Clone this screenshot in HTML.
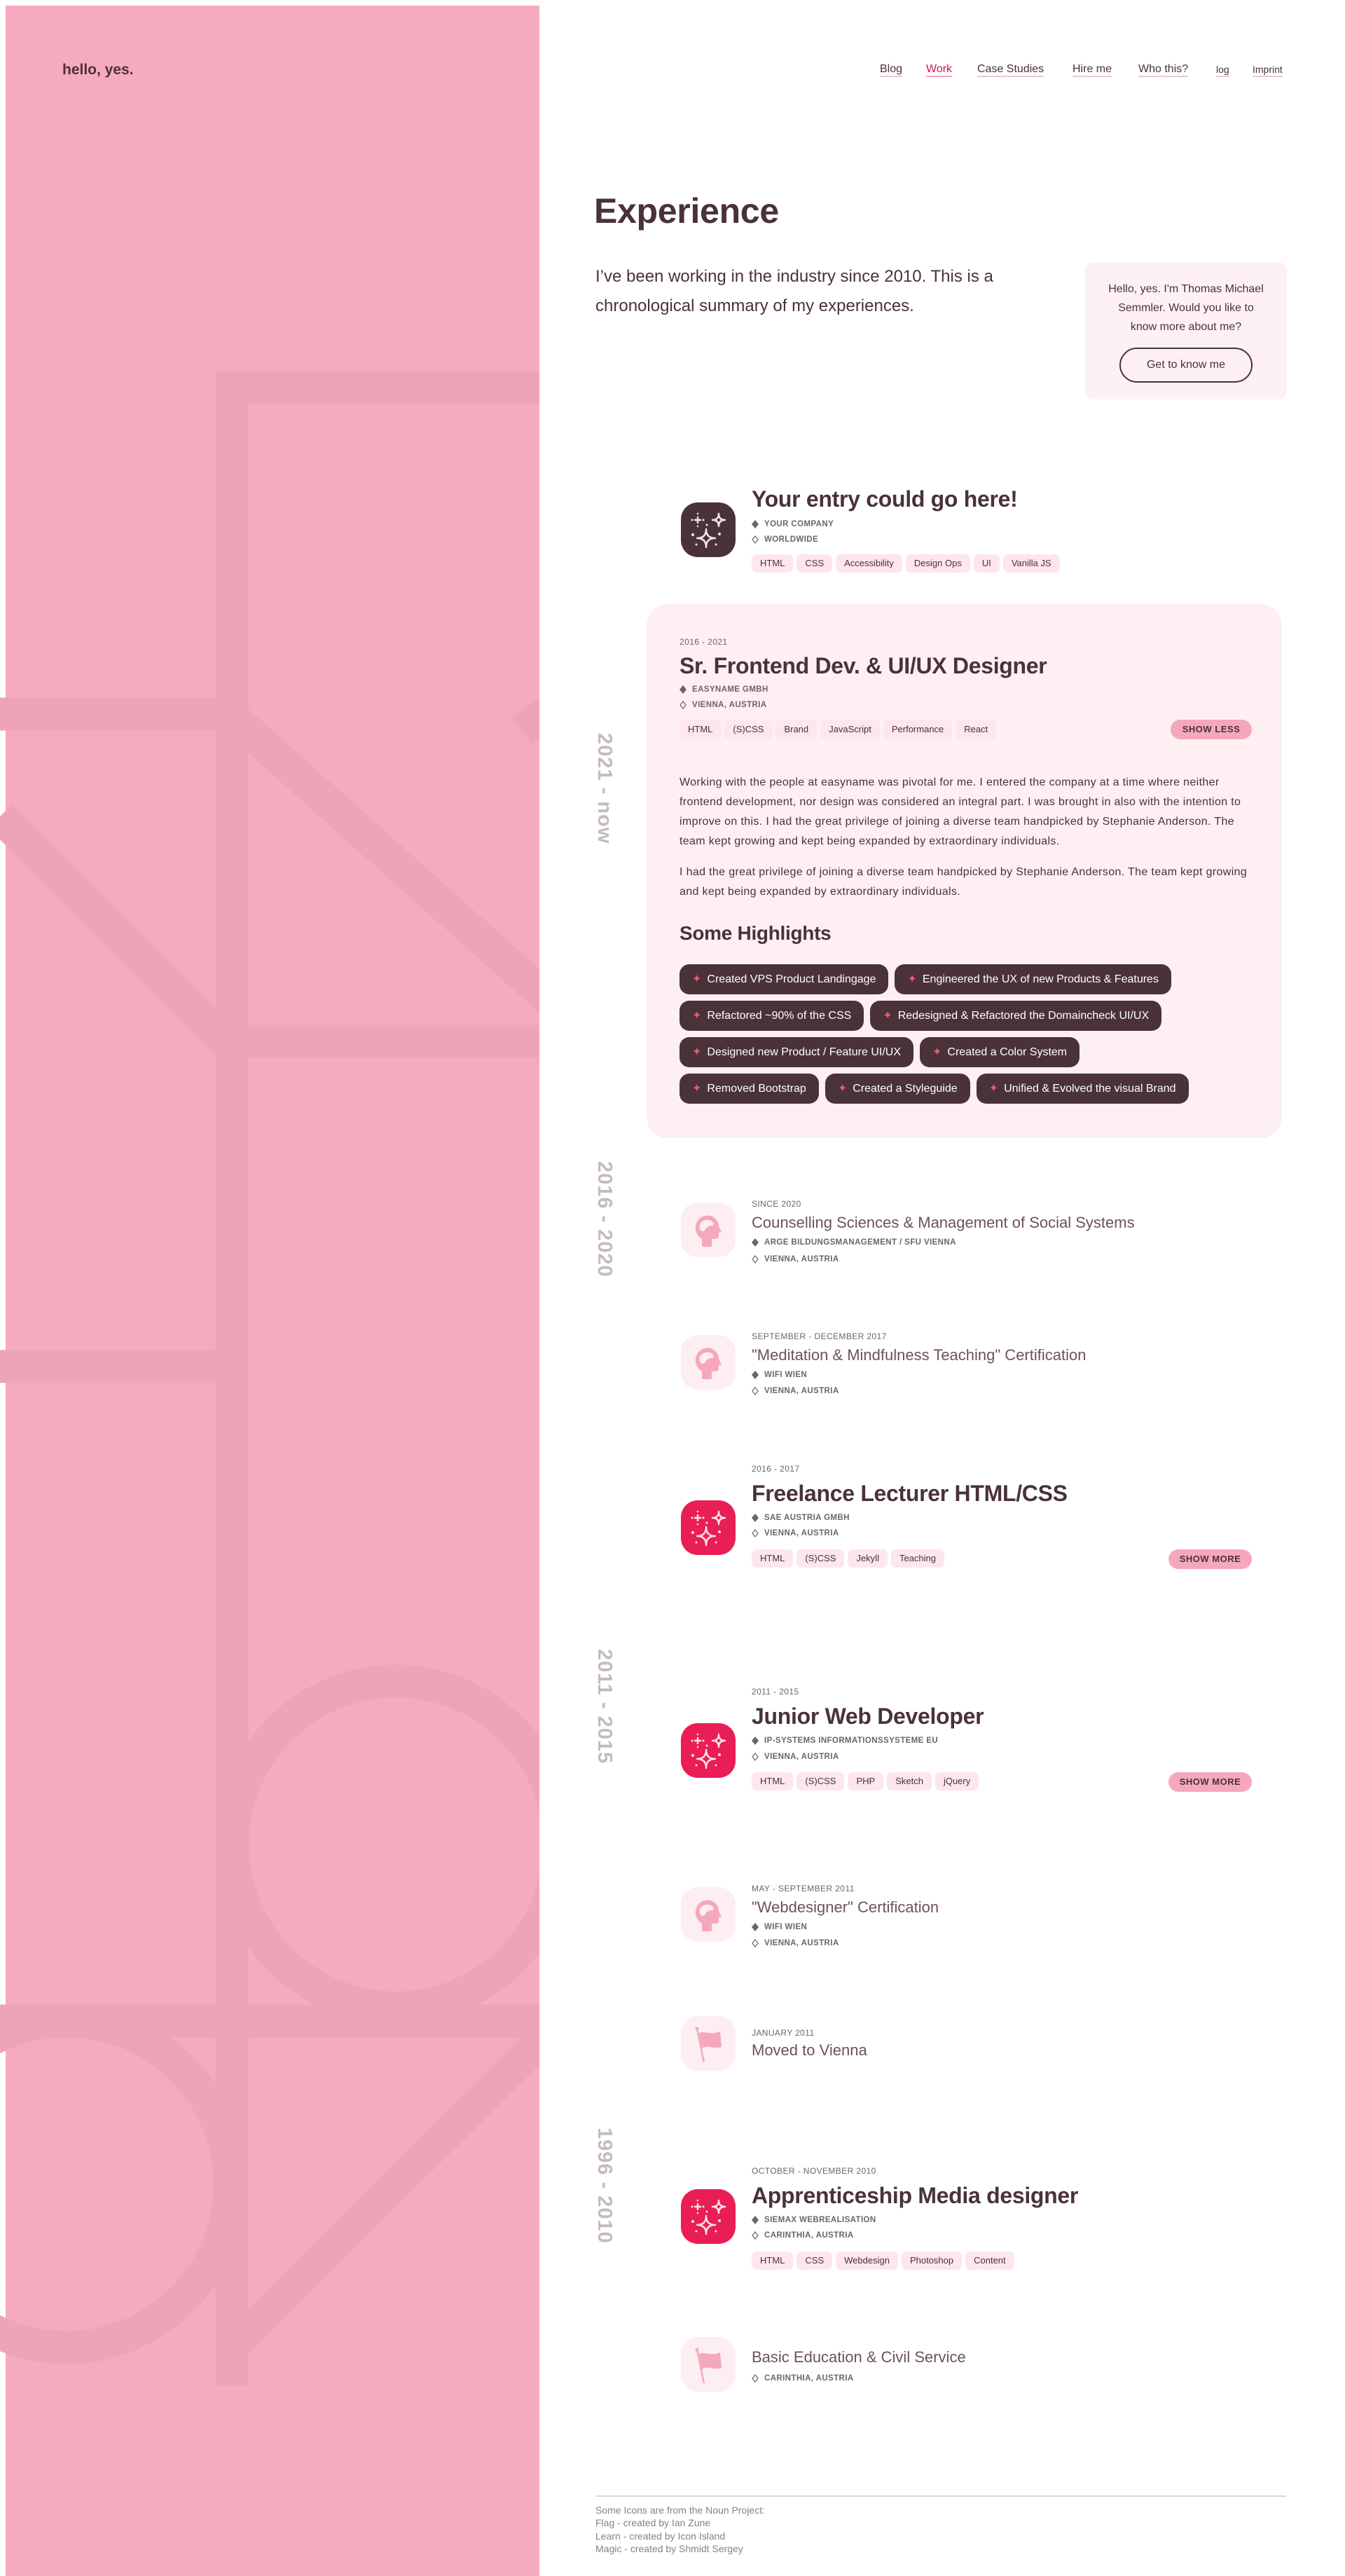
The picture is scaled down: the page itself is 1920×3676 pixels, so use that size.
<!DOCTYPE html>
<html><head><meta charset="utf-8">
<style>
*{margin:0;padding:0;box-sizing:border-box}
html,body{width:1920px;height:3676px;background:#fff;overflow:hidden}
body{position:relative;font-family:"Liberation Sans",sans-serif;color:#4a3239}
.abs{position:absolute}
.nav a{position:absolute;top:90px;font-size:16px;color:#4a3239;text-decoration:none;border-bottom:2px solid #e8c9d1;line-height:18px}
.year{position:absolute;left:850px;width:26px;writing-mode:vertical-rl;font-size:29px;font-weight:bold;color:#c5bbbe;letter-spacing:1px;white-space:nowrap;line-height:26px}
.icon{position:absolute;left:972px;width:78px;height:78px;border-radius:24px}
.dark{background:#4a3239}.red{background:#e91e54}.soft{background:#fdeef2}
.date{position:absolute;left:1073px;font-size:12px;color:#6e6366;letter-spacing:.4px;line-height:14px;white-space:nowrap}
.t1{position:absolute;left:1073px;font-size:32px;font-weight:bold;color:#4a3239;line-height:36px;white-space:nowrap;letter-spacing:-.3px}
.t2{position:absolute;left:1073px;font-size:22px;color:#6b5359;line-height:26px;white-space:nowrap}
.meta{position:absolute;left:1073px;font-size:11.5px;font-weight:bold;color:#6e6366;letter-spacing:.4px;line-height:14px;white-space:nowrap;display:flex;align-items:center;gap:8px}
.tags{position:absolute;left:1073px;display:flex;gap:5px}
.tag{background:#fde6ec;border-radius:7px;font-size:13px;color:#4a3239;padding:0 12px;height:26px;line-height:26px}
.btn{position:absolute;left:1668px;width:119px;height:28px;border-radius:14px;background:#f5a8bc;font-size:13px;font-weight:bold;letter-spacing:.5px;color:#4a3239;text-align:center;line-height:28px}
.pills{position:absolute;left:970px;top:1376px;width:820px}
.row{display:flex;gap:9px;margin-bottom:9px}
.pill{background:#4a3239;color:#fff;border-radius:14px;height:43px;line-height:43px;padding:0 18px;font-size:16px;white-space:nowrap}
.pill b{color:#f0567a;font-weight:normal;margin-right:8px}
.para{font-size:16px;line-height:28px;color:#4a3239;letter-spacing:.35px}
</style></head><body>

<svg class="abs" style="left:0;top:0" width="774" height="3676" viewBox="0 0 774 3676">
<defs><clipPath id="c"><rect x="0" y="8" width="770" height="3668"/></clipPath></defs>
<rect x="8" y="8" width="762" height="3668" fill="#f6aabe"/>
<g clip-path="url(#c)" fill="none" stroke="#eea4b7" stroke-width="47">
<line x1="331" y1="530" x2="331" y2="3404"/>
<line x1="308" y1="553" x2="780" y2="553"/>
<line x1="0" y1="1019" x2="331" y2="1019"/>
<line x1="331" y1="1022" x2="790" y2="1432"/>
<line x1="0" y1="1165" x2="331" y2="1495"/>
<line x1="745" y1="1043" x2="790" y2="1010"/>
<line x1="331" y1="1486" x2="780" y2="1486"/>
<line x1="0" y1="1950" x2="331" y2="1950"/>
<circle cx="565" cy="2632" r="233"/>
<line x1="0" y1="2884" x2="780" y2="2884"/>
<circle cx="95" cy="3117" r="233"/>
</g>
<g clip-path="url(#c)"><polygon points="355,3295 745,2907 774,2907 774,2943 308,3404 308,3330" fill="#eea4b7"/></g>
</svg>

<div class="abs" style="left:89px;top:88px;font-size:21px;font-weight:bold;color:#4a3239">hello, yes.</div>

<div class="nav">
<a style="left:1256px">Blog</a>
<a style="left:1322px;color:#d1164a;border-color:#f5a8bc">Work</a>
<a style="left:1395px">Case Studies</a>
<a style="left:1531px">Hire me</a>
<a style="left:1625px">Who this?</a>
<a style="left:1736px;font-size:14px">log</a>
<a style="left:1788px;font-size:14px">Imprint</a>
</div>

<div class="abs" style="left:848px;top:272px;font-size:50px;font-weight:bold;color:#4a3239;letter-spacing:-.3px">Experience</div>
<div class="abs" style="left:850px;top:374px;width:640px;font-size:24px;line-height:42px;color:#4a3239">I’ve been working in the industry since 2010. This is a chronological summary of my experiences.</div>

<div class="abs" style="left:1549px;top:374px;width:288px;height:196px;background:#fdf1f4;border-radius:12px">
<div style="position:absolute;left:0;top:25px;width:288px;text-align:center;font-size:16px;line-height:27px;color:#4a3239">Hello, yes. I'm Thomas Michael<br>Semmler. Would you like to<br>know more about me?</div>
<div style="position:absolute;left:49px;top:122px;width:190px;height:50px;border:2px solid #4a3239;border-radius:25px;text-align:center;line-height:46px;font-size:16px;color:#4a3239">Get to know me</div>
</div>

<div class="year" style="top:1046px">2021 - now</div>
<div class="year" style="top:1657px">2016 - 2020</div>
<div class="year" style="top:2353px">2011 - 2015</div>
<div class="year" style="top:3036px">1996 - 2010</div>

<svg width="0" height="0" style="position:absolute">
<defs>
<g id="spark" fill="none" stroke="#fbe3ea" stroke-width="2.4" stroke-linejoin="round">
<path d="M36 38 Q36 51 49 51 Q36 51 36 64 Q36 51 23 51 Q36 51 36 38Z"/>
<path d="M54 16 Q54 25 63 25 Q54 25 54 34 Q54 25 45 25 Q54 25 54 16Z"/>
<path d="M24 20v10M19 25h10" />
<g fill="#fbe3ea" stroke="none"><circle cx="16" cy="25" r="1.5"/><circle cx="32" cy="25" r="1.5"/><circle cx="24" cy="16" r="1.3"/><circle cx="24" cy="34" r="1.3"/><circle cx="37" cy="32" r="1.5"/><circle cx="17" cy="46" r="2"/><circle cx="55" cy="45" r="2"/><circle cx="22" cy="60" r="1.5"/><circle cx="50" cy="60" r="1.5"/></g>
</g>
<g id="head"><path fill="#f5a8bc" d="M30 63 L30 52 C22 47 19 38 22 30 C25 21 34 17 42 19 C50 21 54 28 54 34 L58 42 L54 43 L54 48 C54 51 51 52 48 52 L44 52 L44 63 Z"/><path fill="#fdeef2" d="M27 37 C25 29 32 24 40 25 C46 26 48 31 45 33 C40 33 36 35 34 40 C31 42 28 41 27 37 Z"/></g>
<g id="flag"><path stroke="#f5a8bc" stroke-width="2.5" d="M23 18 L33 66" fill="none"/><circle cx="23" cy="18" r="2.5" fill="#f5a8bc"/><path fill="#f5a8bc" d="M26 24 C34 20 42 28 56 22 L58 44 C46 48 38 40 30 46 Z"/></g>
</defs></svg>

<div class="icon dark" style="top:717px"><svg width="78" height="78"><use href="#spark"/></svg></div>
<div class="t1" style="top:694px">Your entry could go here!</div>
<div class="meta" style="top:741px"><svg width="10" height="12"><path d="M5 0L10 6L5 12L0 6Z" fill="#6e6366"/></svg>YOUR COMPANY</div>
<div class="meta" style="top:763px"><svg width="10" height="12"><path d="M5 1L9 6L5 11L1 6Z" fill="none" stroke="#6e6366" stroke-width="1.2"/></svg>WORLDWIDE</div>
<div class="tags" style="top:791px"><span class="tag">HTML</span><span class="tag">CSS</span><span class="tag">Accessibility</span><span class="tag">Design Ops</span><span class="tag">UI</span><span class="tag">Vanilla JS</span></div>

<div class="abs" style="left:923px;top:862px;width:907px;height:762px;background:#fdeff2;border-radius:30px"></div>
<div class="date" style="left:970px;top:909px">2016 - 2021</div>
<div class="t1" style="left:970px;top:932px">Sr. Frontend Dev. &amp; UI/UX Designer</div>
<div class="meta" style="left:970px;top:977px"><svg width="10" height="12"><path d="M5 0L10 6L5 12L0 6Z" fill="#6e6366"/></svg>EASYNAME GMBH</div>
<div class="meta" style="left:970px;top:999px"><svg width="10" height="12"><path d="M5 1L9 6L5 11L1 6Z" fill="none" stroke="#6e6366" stroke-width="1.2"/></svg>VIENNA, AUSTRIA</div>
<div class="tags" style="left:970px;top:1027px"><span class="tag" style="height:28px;line-height:28px">HTML</span><span class="tag" style="height:28px;line-height:28px">(S)CSS</span><span class="tag" style="height:28px;line-height:28px">Brand</span><span class="tag" style="height:28px;line-height:28px">JavaScript</span><span class="tag" style="height:28px;line-height:28px">Performance</span><span class="tag" style="height:28px;line-height:28px">React</span></div>
<div class="btn" style="left:1671px;top:1027px;width:116px">SHOW LESS</div>
<div class="abs para" style="left:970px;top:1103px;width:820px">Working with the people at easyname was pivotal for me. I entered the company at a time where neither frontend development, nor design was considered an integral part. I was brought in also with the intention to improve on this. I had the great privilege of joining a diverse team handpicked by Stephanie Anderson. The team kept growing and kept being expanded by extraordinary individuals.</div>
<div class="abs para" style="left:970px;top:1231px;width:820px">I had the great privilege of joining a diverse team handpicked by Stephanie Anderson. The team kept growing and kept being expanded by extraordinary individuals.</div>
<div class="abs" style="left:970px;top:1316px;font-size:28px;font-weight:bold;color:#4a3239;letter-spacing:-.3px">Some Highlights</div>
<div class="pills">
<div class="row"><span class="pill"><b>✦</b>Created VPS Product Landingage</span><span class="pill"><b>✦</b>Engineered the UX of new Products &amp; Features</span></div>
<div class="row"><span class="pill"><b>✦</b>Refactored ~90% of the CSS</span><span class="pill"><b>✦</b>Redesigned &amp; Refactored the Domaincheck UI/UX</span></div>
<div class="row"><span class="pill"><b>✦</b>Designed new Product / Feature UI/UX</span><span class="pill"><b>✦</b>Created a Color System</span></div>
<div class="row"><span class="pill"><b>✦</b>Removed Bootstrap</span><span class="pill"><b>✦</b>Created a Styleguide</span><span class="pill"><b>✦</b>Unified &amp; Evolved the visual Brand</span></div>
</div>

<div class="icon soft" style="top:1716px"><svg width="78" height="78"><use href="#head"/></svg></div>
<div class="date" style="top:1711px">SINCE 2020</div>
<div class="t2" style="top:1732px">Counselling Sciences &amp; Management of Social Systems</div>
<div class="meta" style="top:1766px"><svg width="10" height="12"><path d="M5 0L10 6L5 12L0 6Z" fill="#6e6366"/></svg>ARGE BILDUNGSMANAGEMENT / SFU VIENNA</div>
<div class="meta" style="top:1790px"><svg width="10" height="12"><path d="M5 1L9 6L5 11L1 6Z" fill="none" stroke="#6e6366" stroke-width="1.2"/></svg>VIENNA, AUSTRIA</div>

<div class="icon soft" style="top:1905px"><svg width="78" height="78"><use href="#head"/></svg></div>
<div class="date" style="top:1900px">SEPTEMBER - DECEMBER 2017</div>
<div class="t2" style="top:1921px">"Meditation &amp; Mindfulness Teaching" Certification</div>
<div class="meta" style="top:1955px"><svg width="10" height="12"><path d="M5 0L10 6L5 12L0 6Z" fill="#6e6366"/></svg>WIFI WIEN</div>
<div class="meta" style="top:1978px"><svg width="10" height="12"><path d="M5 1L9 6L5 11L1 6Z" fill="none" stroke="#6e6366" stroke-width="1.2"/></svg>VIENNA, AUSTRIA</div>

<div class="icon red" style="top:2141px"><svg width="78" height="78"><use href="#spark"/></svg></div>
<div class="date" style="top:2089px">2016 - 2017</div>
<div class="t1" style="top:2113px">Freelance Lecturer HTML/CSS</div>
<div class="meta" style="top:2159px"><svg width="10" height="12"><path d="M5 0L10 6L5 12L0 6Z" fill="#6e6366"/></svg>SAE AUSTRIA GMBH</div>
<div class="meta" style="top:2181px"><svg width="10" height="12"><path d="M5 1L9 6L5 11L1 6Z" fill="none" stroke="#6e6366" stroke-width="1.2"/></svg>VIENNA, AUSTRIA</div>
<div class="tags" style="top:2211px"><span class="tag">HTML</span><span class="tag">(S)CSS</span><span class="tag">Jekyll</span><span class="tag">Teaching</span></div>
<div class="btn" style="top:2211px">SHOW MORE</div>

<div class="icon red" style="top:2459px"><svg width="78" height="78"><use href="#spark"/></svg></div>
<div class="date" style="top:2407px">2011 - 2015</div>
<div class="t1" style="top:2431px">Junior Web Developer</div>
<div class="meta" style="top:2477px"><svg width="10" height="12"><path d="M5 0L10 6L5 12L0 6Z" fill="#6e6366"/></svg>IP-SYSTEMS INFORMATIONSSYSTEME EU</div>
<div class="meta" style="top:2500px"><svg width="10" height="12"><path d="M5 1L9 6L5 11L1 6Z" fill="none" stroke="#6e6366" stroke-width="1.2"/></svg>VIENNA, AUSTRIA</div>
<div class="tags" style="top:2529px"><span class="tag">HTML</span><span class="tag">(S)CSS</span><span class="tag">PHP</span><span class="tag">Sketch</span><span class="tag">jQuery</span></div>
<div class="btn" style="top:2529px">SHOW MORE</div>

<div class="icon soft" style="top:2693px"><svg width="78" height="78"><use href="#head"/></svg></div>
<div class="date" style="top:2688px">MAY - SEPTEMBER 2011</div>
<div class="t2" style="top:2709px">"Webdesigner" Certification</div>
<div class="meta" style="top:2743px"><svg width="10" height="12"><path d="M5 0L10 6L5 12L0 6Z" fill="#6e6366"/></svg>WIFI WIEN</div>
<div class="meta" style="top:2766px"><svg width="10" height="12"><path d="M5 1L9 6L5 11L1 6Z" fill="none" stroke="#6e6366" stroke-width="1.2"/></svg>VIENNA, AUSTRIA</div>

<div class="icon soft" style="top:2877px"><svg width="78" height="78"><use href="#flag"/></svg></div>
<div class="date" style="top:2894px">JANUARY 2011</div>
<div class="t2" style="top:2913px">Moved to Vienna</div>

<div class="icon red" style="top:3124px"><svg width="78" height="78"><use href="#spark"/></svg></div>
<div class="date" style="top:3091px">OCTOBER - NOVEMBER 2010</div>
<div class="t1" style="top:3115px">Apprenticeship Media designer</div>
<div class="meta" style="top:3161px"><svg width="10" height="12"><path d="M5 0L10 6L5 12L0 6Z" fill="#6e6366"/></svg>SIEMAX WEBREALISATION</div>
<div class="meta" style="top:3183px"><svg width="10" height="12"><path d="M5 1L9 6L5 11L1 6Z" fill="none" stroke="#6e6366" stroke-width="1.2"/></svg>CARINTHIA, AUSTRIA</div>
<div class="tags" style="top:3213px"><span class="tag">HTML</span><span class="tag">CSS</span><span class="tag">Webdesign</span><span class="tag">Photoshop</span><span class="tag">Content</span></div>

<div class="icon soft" style="top:3335px"><svg width="78" height="78"><use href="#flag"/></svg></div>
<div class="t2" style="top:3351px">Basic Education &amp; Civil Service</div>
<div class="meta" style="top:3387px"><svg width="10" height="12"><path d="M5 1L9 6L5 11L1 6Z" fill="none" stroke="#6e6366" stroke-width="1.2"/></svg>CARINTHIA, AUSTRIA</div>

<div class="abs" style="left:850px;top:3561px;width:986px;height:2px;background:#ddd6d8"></div>
<div class="abs" style="left:850px;top:3573px;font-size:14px;line-height:18.3px;color:#8a7f82">Some Icons are from the Noun Project:<br>Flag - created by Ian Zune<br>Learn - created by Icon Island<br>Magic - created by Shmidt Sergey</div>

</body></html>
